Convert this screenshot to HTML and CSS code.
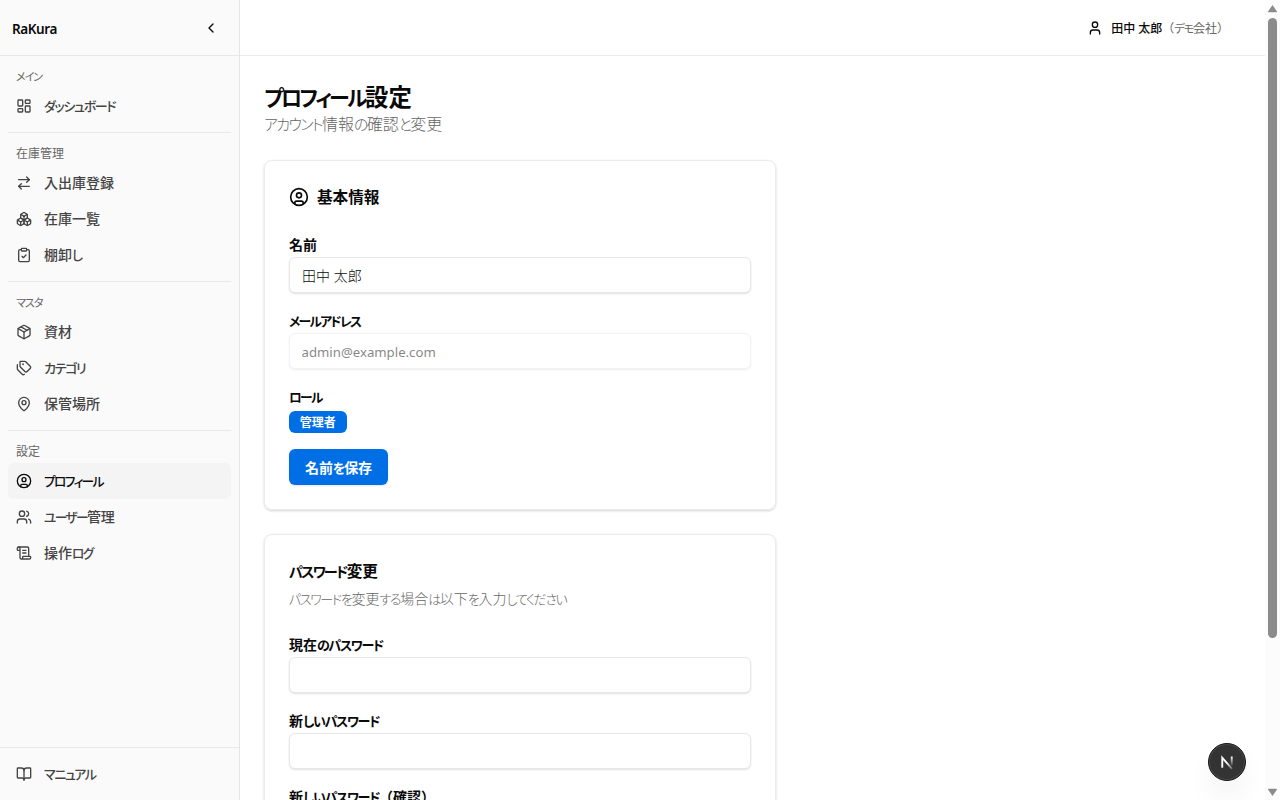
FILE: index.html
```
<!DOCTYPE html>
<html lang="ja">
<head>
  <meta charset="UTF-8">
  <meta name="viewport" content="width=device-width, initial-scale=1.0">
  <title>プロフィール設定 - RaKura</title>
  <link rel="stylesheet" href="styles.css">
</head>
<body>
  <div class="root">
    <aside class="sidebar">
      <div class="sidebar-head">
        <span class="brand">RaKura</span>
        <svg class="icon" viewBox="0 0 24 24"><path d="m15 18-6-6 6-6"/></svg>
      </div>
      <nav class="nav">
        <div class="group">
          <h3><span class="kana">メイン</span></h3>
          <a class="item" href="#">
            <svg class="icon" viewBox="0 0 24 24"><rect width="7" height="9" x="3" y="3" rx="1"/><rect width="7" height="5" x="14" y="3" rx="1"/><rect width="7" height="9" x="14" y="12" rx="1"/><rect width="7" height="5" x="3" y="16" rx="1"/></svg>
            <span class="text"><span class="kana">ダッシュボード</span></span>
          </a>
        </div>
        <div class="group">
          <h3>在庫管理</h3>
          <a class="item" href="#">
            <svg class="icon" viewBox="0 0 24 24"><path d="m16 3 4 4-4 4"/><path d="M20 7H4"/><path d="m8 21-4-4 4-4"/><path d="M4 17h16"/></svg>
            <span class="text">入出庫登録</span>
          </a>
          <a class="item" href="#">
            <svg class="icon" viewBox="0 0 24 24"><path d="M2.97 12.92A2 2 0 0 0 2 14.63v3.24a2 2 0 0 0 .97 1.71l3 1.8a2 2 0 0 0 2.06 0L12 19v-5.5l-5-3-4.03 2.42Z"/><path d="m7 16.5-4.74-2.85"/><path d="m7 16.5 5-3"/><path d="M7 16.5v5.17"/><path d="M12 13.5V19l3.97 2.38a2 2 0 0 0 2.06 0l3-1.8a2 2 0 0 0 .97-1.71v-3.24a2 2 0 0 0-.97-1.71L17 10.5l-5 3Z"/><path d="m17 16.5-5-3"/><path d="m17 16.5 4.74-2.85"/><path d="M17 16.5v5.17"/><path d="M7.97 4.42A2 2 0 0 0 7 6.13v4.37l5 3 5-3V6.13a2 2 0 0 0-.97-1.71l-3-1.8a2 2 0 0 0-2.06 0l-3 1.8Z"/><path d="M12 8 7.26 5.15"/><path d="m12 8 4.74-2.85"/><path d="M12 13.5V8"/></svg>
            <span class="text">在庫一覧</span>
          </a>
          <a class="item" href="#">
            <svg class="icon" viewBox="0 0 24 24"><rect width="8" height="4" x="8" y="2" rx="1"/><path d="M16 4h2a2 2 0 0 1 2 2v14a2 2 0 0 1-2 2H6a2 2 0 0 1-2-2V6a2 2 0 0 1 2-2h2"/><path d="m9 14 2 2 4-4"/></svg>
            <span class="text">棚卸<span class="kana">し</span></span>
          </a>
        </div>
        <div class="group">
          <h3><span class="kana">マスタ</span></h3>
          <a class="item" href="#">
            <svg class="icon" viewBox="0 0 24 24"><path d="M11 21.73a2 2 0 0 0 2 0l7-4A2 2 0 0 0 21 16V8a2 2 0 0 0-1-1.73l-7-4a2 2 0 0 0-2 0l-7 4A2 2 0 0 0 3 8v8a2 2 0 0 0 1 1.73z"/><path d="M12 22V12"/><path d="M3.29 7 12 12l8.71-5"/><path d="m7.5 4.27 9 5.15"/></svg>
            <span class="text">資材</span>
          </a>
          <a class="item" href="#">
            <svg class="icon" viewBox="0 0 24 24"><path d="M13.172 2a2 2 0 0 1 1.414.586l6.71 6.71a2.4 2.4 0 0 1 0 3.408l-4.592 4.592a2.4 2.4 0 0 1-3.408 0l-6.71-6.71A2 2 0 0 1 6 9.172V3a1 1 0 0 1 1-1z"/><path d="M2 7v6.172a2 2 0 0 0 .586 1.414l6.71 6.71a2.4 2.4 0 0 0 3.191.193"/><circle cx="10.5" cy="6.5" r=".5"/></svg>
            <span class="text"><span class="kana">カテゴリ</span></span>
          </a>
          <a class="item" href="#">
            <svg class="icon" viewBox="0 0 24 24"><path d="M20 10c0 4.993-5.539 10.193-7.399 11.799a1 1 0 0 1-1.202 0C9.539 20.193 4 14.993 4 10a8 8 0 0 1 16 0"/><circle cx="12" cy="10" r="3"/></svg>
            <span class="text">保管場所</span>
          </a>
        </div>
        <div class="group">
          <h3>設定</h3>
          <a class="item active" href="#">
            <svg class="icon" viewBox="0 0 24 24"><circle cx="12" cy="12" r="10"/><circle cx="12" cy="10" r="3"/><path d="M7 20.662V19a2 2 0 0 1 2-2h6a2 2 0 0 1 2 2v1.662"/></svg>
            <span class="text"><span class="kana tight">プロフィール</span></span>
          </a>
          <a class="item" href="#">
            <svg class="icon" viewBox="0 0 24 24"><path d="M16 21v-2a4 4 0 0 0-4-4H6a4 4 0 0 0-4 4v2"/><circle cx="9" cy="7" r="4"/><path d="M22 21v-2a4 4 0 0 0-3-3.87"/><path d="M16 3.13a4 4 0 0 1 0 7.75"/></svg>
            <span class="text"><span class="kana tight">ユーザー</span>管理</span>
          </a>
          <a class="item" href="#">
            <svg class="icon" viewBox="0 0 24 24"><path d="M15 12h-5"/><path d="M15 8h-5"/><path d="M19 17V5a2 2 0 0 0-2-2H4"/><path d="M8 21h12a2 2 0 0 0 2-2v-1a1 1 0 0 0-1-1H11a1 1 0 0 0-1 1v1a2 2 0 1 1-4 0V5a2 2 0 1 0-4 0v2a1 1 0 0 0 1 1h3"/></svg>
            <span class="text">操作<span class="kana tight">ログ</span></span>
          </a>
        </div>
      </nav>
      <div class="sidebar-foot">
        <a class="item" href="#">
          <svg class="icon" viewBox="0 0 24 24"><path d="M12 7v14"/><path d="M3 18a1 1 0 0 1-1-1V4a1 1 0 0 1 1-1h5a4 4 0 0 1 4 4 4 4 0 0 1 4-4h5a1 1 0 0 1 1 1v13a1 1 0 0 1-1 1h-6a3 3 0 0 0-3 3 3 3 0 0 0-3-3z"/></svg>
          <span class="text"><span class="kana">マニュアル</span></span>
        </a>
      </div>
    </aside>

    <div class="page">
      <header class="topbar">
        <svg class="icon" viewBox="0 0 24 24"><path d="M19 21v-2a4 4 0 0 0-4-4H9a4 4 0 0 0-4 4v2"/><circle cx="12" cy="7" r="4"/></svg>
        <span class="user">田中 太郎</span>
        <span class="company">（<span class="kana">デモ</span>会社）</span>
      </header>
      <main class="content">
        <h1><span class="kana tight">プロフィール</span>設定</h1>
        <p class="lead"><span class="kana">アカウント</span>情報<span class="kana">の</span>確認<span class="kana">と</span>変更</p>

        <form class="card">
          <h2>
            <svg class="icon" viewBox="0 0 24 24"><circle cx="12" cy="12" r="10"/><circle cx="12" cy="10" r="3"/><path d="M7 20.662V19a2 2 0 0 1 2-2h6a2 2 0 0 1 2 2v1.662"/></svg>
            <span class="text">基本情報</span>
          </h2>
          <div class="fields">
            <div class="field">
              <label for="txt-name">名前</label>
              <input id="txt-name" type="text" value="田中 太郎">
            </div>
            <div class="field">
              <label for="txt-email"><span class="kana tight">メールアドレス</span></label>
              <input id="txt-email" type="email" value="admin@example.com" disabled>
            </div>
            <div class="field">
              <label><span class="kana tight">ロール</span></label>
              <span class="badge">管理者</span>
            </div>
            <button class="btn" type="button">名前<span class="kana">を</span>保存</button>
          </div>
        </form>

        <form class="card">
          <h2><span class="text"><span class="kana tight">パスワード</span>変更</span></h2>
          <p class="desc"><span class="kana">パスワードを</span>変更<span class="kana">する</span>場合<span class="kana">は</span>以下<span class="kana">を</span>入力<span class="kana">してください</span></p>
          <div class="fields">
            <div class="field">
              <label for="txt-current">現在<span class="kana">のパスワード</span></label>
              <input id="txt-current" type="password">
            </div>
            <div class="field">
              <label for="txt-new">新<span class="kana">しいパスワード</span></label>
              <input id="txt-new" type="password">
            </div>
            <div class="field">
              <label for="txt-confirm">新<span class="kana">しいパスワード</span>（確認）</label>
              <input id="txt-confirm" type="password">
            </div>
          </div>
        </form>
      </main>
    </div>

    <div class="scrollbar">
      <svg viewBox="0 0 15 18"><path d="M7.5 5 12 11.5q.3.8-.6.8H3.6q-.9 0-.6-.8z"/></svg>
      <div class="thumb"></div>
      <svg class="down" viewBox="0 0 15 18"><path d="M7.5 14 3 7.5q-.3-.8.6-.8h7.8q.9 0 .6.8z"/></svg>
    </div>
  </div>

  <div class="dev-badge">
    <svg viewBox="0 0 38 38">
      <defs>
        <linearGradient id="fade-diag" x1="20" y1="19" x2="26" y2="27" gradientUnits="userSpaceOnUse"><stop stop-color="#fff"/><stop offset="1" stop-color="#fff" stop-opacity="0.1"/></linearGradient>
        <linearGradient id="fade-bar" x1="0" y1="13" x2="0" y2="24" gradientUnits="userSpaceOnUse"><stop stop-color="#fff"/><stop offset="1" stop-color="#fff" stop-opacity="0"/></linearGradient>
      </defs>
      <path d="M14 25V14.5l10.3 11.8" fill="none" stroke="url(#fade-diag)" stroke-width="2"/>
      <rect x="23" y="13.2" width="2" height="9.5" fill="url(#fade-bar)"/>
    </svg>
  </div>
</body>
</html>
```
FILE: styles.css
```
* {
  margin: 0;
  padding: 0;
  box-sizing: border-box;
}
body {
  height: 100vh;
  overflow: hidden;
  background-color: #fff;
  color: #0a0a0a;
  font-family: "Noto Sans", "Noto Sans CJK JP", sans-serif;
  font-size: 14px;
}
.root {
  height: 100vh;
  display: flex;
}
.icon {
  width: 16px;
  height: 16px;
  flex: none;
  fill: none;
  stroke: currentColor;
  stroke-width: 2;
  stroke-linecap: round;
  stroke-linejoin: round;
}
/* kana are set tighter than kanji */
.kana {
  font-size: 0.93em;
  font-feature-settings: "palt";
  letter-spacing: -0.105em;
}
.kana.tight {
  font-size: 0.91em;
  letter-spacing: -0.13em;
}
.text {
  padding-bottom: 2px;
}

/* sidebar */
.sidebar {
  width: 240px;
  flex: none;
  display: flex;
  flex-direction: column;
  border-right: 1px solid #e5e5e5;
  background-color: #fafafa;
}
.sidebar-head {
  height: 56px;
  padding: 0 20px 0 12px;
  display: flex;
  align-items: center;
  justify-content: space-between;
  border-bottom: 1px solid #e8e8e8;
}
.brand {
  padding-top: 2px;
  font-size: 13.5px;
  font-weight: 600;
  letter-spacing: -0.03em;
}
.nav {
  flex: 1;
  padding: 8px;
}
.group + .group {
  margin-top: 8px;
  padding-top: 8px;
  border-top: 1px solid #e8e8e8;
}
.group h3 {
  height: 24px;
  padding: 0 8px;
  color: #666;
  font-size: 12px;
  font-weight: 400;
  line-height: 26px;
}
.item {
  height: 36px;
  padding: 0 8px;
  border-radius: 6px;
  display: flex;
  align-items: center;
  gap: 12px;
  color: #444;
  font-weight: 500;
  text-decoration: none;
}
.item.active {
  background-color: #f4f4f4;
  color: #0a0a0a;
}
.sidebar-foot {
  padding: 8px;
  border-top: 1px solid #e8e8e8;
}

/* page */
.page {
  flex: 1;
  min-width: 0;
  overflow: hidden;
}
.topbar {
  height: 56px;
  padding-right: 36px;
  display: flex;
  align-items: center;
  justify-content: flex-end;
  border-bottom: 1px solid #ebebeb;
  font-size: 12px;
}
.user {
  margin-left: 8px;
  font-weight: 500;
}
.company {
  color: #666;
}
.content {
  padding: 24px;
}
h1 {
  height: 32px;
  font-size: 23.4px;
  font-weight: 600;
  line-height: 34px;
}
h1 .kana.tight {
  font-size: 0.9em;
  letter-spacing: -0.125em;
}
.lead {
  height: 24px;
  margin-bottom: 24px;
  color: #666;
  font-size: 16px;
  font-weight: 300;
  line-height: 24px;
}
.card {
  width: 512px;
  margin-bottom: 24px;
  padding: 24px;
  border: 1px solid #ebebeb;
  border-radius: 8px;
  box-shadow: 0 1px 3px rgba(0, 0, 0, 0.1), 0 1px 2px rgba(0, 0, 0, 0.08);
}
h2 {
  height: 24px;
  display: flex;
  align-items: center;
  gap: 8px;
  font-size: 15.6px;
  font-weight: 600;
}
h2 .icon {
  width: 20px;
  height: 20px;
}
.desc {
  height: 20px;
  margin-top: 6px;
  color: #666;
  font-weight: 300;
  line-height: 20px;
}
.fields {
  margin-top: 24px;
  display: flex;
  flex-direction: column;
  align-items: flex-start;
  gap: 16px;
}
.field {
  width: 100%;
}
label {
  height: 24px;
  display: block;
  font-weight: 600;
  line-height: 24px;
}
input {
  width: 100%;
  height: 36px;
  padding: 0 12px;
  border: 1px solid #e8e8e8;
  border-radius: 6px;
  display: block;
  background-color: #fff;
  box-shadow: 0 1px 2px rgba(0, 0, 0, 0.12);
  color: #0a0a0a;
  font-family: inherit;
  font-size: 14px;
  font-weight: 300;
}
input[type="email"] {
  padding: 1px 12px 0 11.5px;
  font-size: 13.2px;
  font-weight: 400;
}
input:disabled {
  opacity: 0.5;
}
.badge {
  width: 57.5px;
  height: 22px;
  margin-top: 2px;
  border-radius: 6px;
  display: block;
  background-color: #006fe6;
  color: #fff;
  font-size: 12px;
  font-weight: 600;
  line-height: 23px;
  text-align: center;
}
.btn {
  height: 36px;
  padding: 0 16px 1px;
  border: none;
  border-radius: 6px;
  background-color: #006fe6;
  box-shadow: 0 1px 2px rgba(0, 0, 0, 0.1);
  color: #fff;
  font-family: inherit;
  font-size: 14px;
  font-weight: 600;
}

/* scrollbar */
.scrollbar {
  width: 15px;
  flex: none;
  display: flex;
  flex-direction: column;
  align-items: center;
  background-color: #fcfcfc;
}
.scrollbar svg {
  width: 15px;
  height: 18px;
  fill: #8b8b8b;
}
.scrollbar .down {
  margin-top: auto;
}
.thumb {
  width: 9px;
  height: 620px;
  border-radius: 5px;
  background-color: #8b8b8b;
}

.dev-badge {
  position: fixed;
  right: 34px;
  bottom: 19px;
  width: 38px;
  height: 38px;
  border: 1px solid #171717;
  border-radius: 50%;
  background-color: #333;
  box-shadow: inset 0 0 0 1px #4a4a4a, 0 16px 32px -8px rgba(0, 0, 0, 0.14);
}
.dev-badge svg {
  width: 36px;
  height: 36px;
  display: block;
}
```
